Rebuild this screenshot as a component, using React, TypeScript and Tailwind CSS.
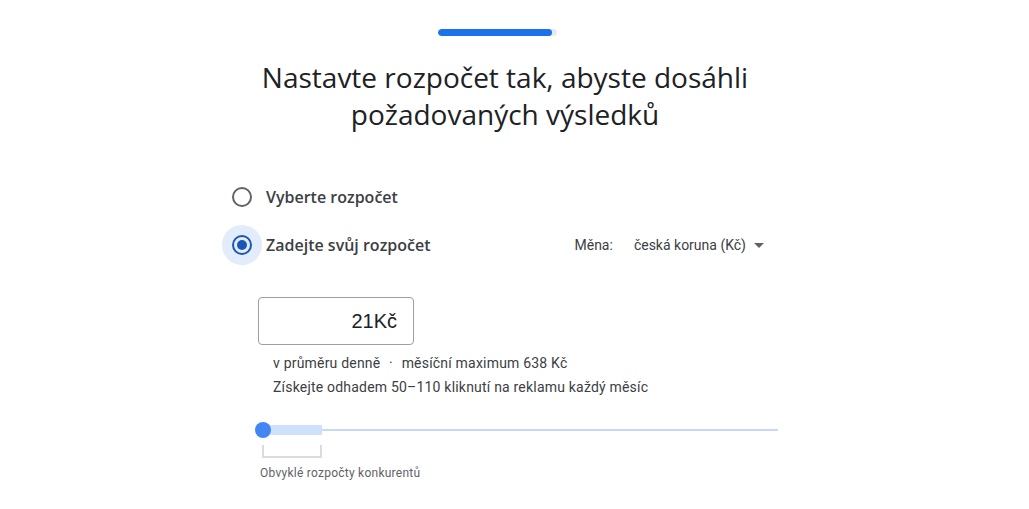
export default function App() {
  return (
    <div className="w-[1029px] h-[509px] bg-white overflow-hidden" style={{ fontFamily: "Roboto, 'Noto Sans', sans-serif" }}>
      <div className="w-[556px] ml-[222px] flex flex-col">
        {/* progress */}
        <div className="mt-[29px] ml-[216px] w-[119px] h-[7px] rounded-full bg-[#e8eaed] overflow-hidden">
          <div className="w-[114px] h-full rounded-full bg-[#1a73e8]" />
        </div>

        <h1
          className="mt-[23px] text-center text-[28px] leading-[37px] text-[#202124] font-normal -ml-[5px] w-[576px]"
          style={{ fontFamily: "'Open Sans', Roboto, sans-serif" }}
        >
          Nastavte rozpočet tak, abyste dosáhli
          <br />
          požadovaných výsledků
        </h1>

        {/* radios */}
        <div className="mt-[44px] flex flex-col" style={{ fontFamily: "'Open Sans', Roboto, sans-serif" }}>
          <label className="flex items-center h-[40px]">
            <span className="w-[40px] h-[40px] flex items-center justify-center rounded-full">
              <span className="w-[20px] h-[20px] rounded-full border-2 border-[#5f6368]" />
            </span>
            <span className="ml-[4px] text-[16px] font-semibold text-[#3c4043]">Vyberte rozpočet</span>
          </label>
          <div className="flex items-center mt-[8px]">
            <label className="flex items-center h-[40px]">
              <span className="w-[40px] h-[40px] flex items-center justify-center rounded-full bg-[#e3ecfb]">
                <span className="w-[20px] h-[20px] rounded-full border-2 border-[#1a56b8] flex items-center justify-center">
                  <span className="w-[10px] h-[10px] rounded-full bg-[#1a56b8]" />
                </span>
              </span>
              <span className="ml-[4px] text-[16px] font-semibold text-[#3c4043]">Zadejte svůj rozpočet</span>
            </label>
            <div className="ml-auto flex items-center text-[14px] text-[#3c4043] pr-[14px]" style={{ fontFamily: "Roboto, sans-serif" }}>
              <span>Měna:</span>
              <span className="ml-[21px]">česká koruna (Kč)</span>
              <svg width="10" height="5" viewBox="0 0 10 5" className="ml-[8px]">
                <path d="M0 0 L10 0 L5 5 Z" fill="#5f6368" />
              </svg>
            </div>
          </div>
        </div>

        {/* budget */}
        <div className="ml-[36px] mt-[32px] flex flex-col">
          <div className="w-[156px] h-[48px] border border-[#9aa0a6] rounded-[4px] flex items-center justify-end pr-[16px] text-[20px] text-[#202124]" style={{ fontFamily: "Arimo, 'Liberation Sans', Arial, sans-serif" }}>
            21Kč
          </div>
          <div className="ml-[15px] mt-[6px] text-[14px] tracking-[0.2px] leading-[24px] text-[#3c4043]">
            <div>
              v průměru denně <span className="mx-[5px]">·</span> měsíční maximum 638 Kč
            </div>
            <div>Získejte odhadem 50–110 kliknutí na reklamu každý měsíc</div>
          </div>

          {/* slider */}
          <div className="mt-[21px] relative w-[520px] h-[20px]">
            <div className="absolute left-0 right-0 top-[9px] h-[2px] bg-[#c6d9f7]" />
            <div className="absolute left-[5px] w-[59px] top-[5px] h-[10px] bg-[#cfe0fb]" />
            <div className="absolute left-[-3px] top-[2px] w-[16px] h-[16px] rounded-full bg-[#4285f4]" />
          </div>
          <div className="ml-[4px] mt-[5px] w-[60px] h-[13px] border-2 border-t-0 border-[#dadce0]" />
          <div className="ml-[2px] mt-[6px] text-[12px] tracking-[0.25px] text-[#5f6368]">Obvyklé rozpočty konkurentů</div>
        </div>
      </div>
    </div>
  );
}
